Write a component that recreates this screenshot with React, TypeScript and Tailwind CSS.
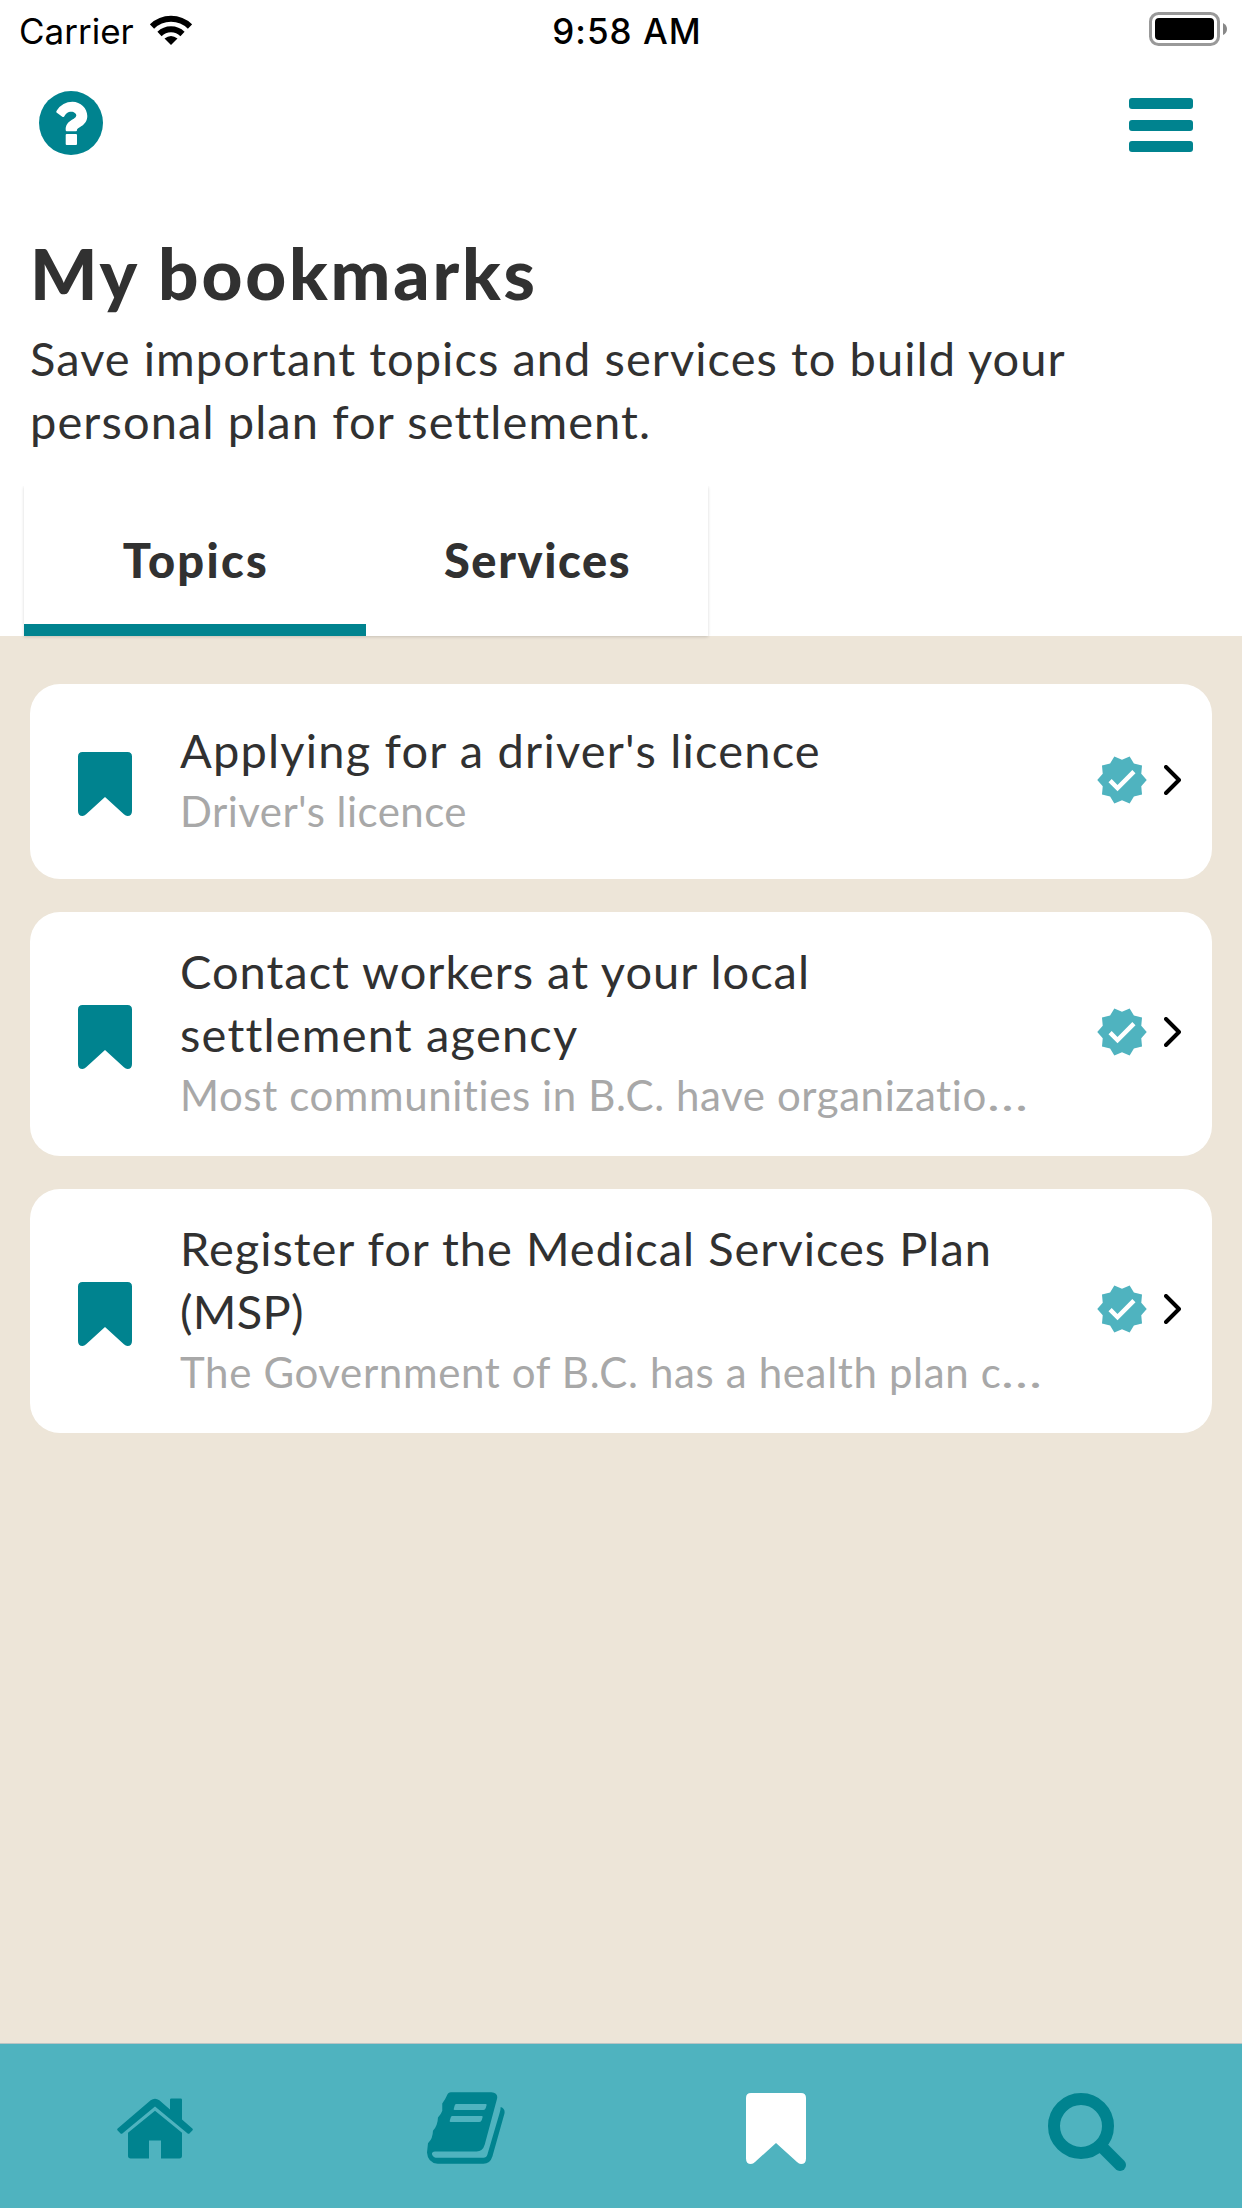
import React from "react";

type Line = [text: string, spacing: string];
type Card = { title: Line[]; sub: Line; truncated?: boolean; height: string };

/** One unbroken line of copy with its own tracking. */
function Fit({ text, spacing, truncated }: { text: string; spacing: string; truncated?: boolean }) {
  return (
    <span className="block whitespace-nowrap" style={{ letterSpacing: spacing }}>
      {text}
      {truncated && <span className="inline-block origin-left scale-x-[1.3]">…</span>}
    </span>
  );
}

function Bookmark({ className }: { className: string }) {
  return (
    <svg viewBox="0 0 60 71" preserveAspectRatio="none" className={className} fill="currentColor">
      <path d="M5 0H55Q60 0 60 5V65.500Q60 71 55 71Q53 71 51 69L30 50L9 69Q7 71 5 71Q0 71 0 65.500V5Q0 0 5 0Z" />
    </svg>
  );
}

function Decagram() {
  return (
    <svg viewBox="0 0 24 24" className="h-[54px] w-[54px] text-[#4fb3bf]" fill="currentColor">
      <path d="M23 12L20.560 9.220L20.900 5.540L17.290 4.720L15.400 1.540L12 3L8.600 1.540L6.710 4.720L3.100 5.530L3.440 9.210L1 12L3.440 14.780L3.100 18.470L6.710 19.290L8.600 22.470L12 21L15.400 22.460L17.290 19.280L20.900 18.460L20.560 14.780L23 12M10 17L6 13L7.410 11.590L10 14.170L16.590 7.580L18 9L10 17Z" />
    </svg>
  );
}

function House() {
  return (
    <svg viewBox="0 0 228 182" className="mt-[5px] h-[61px] w-[76px]" fill="currentColor">
      <path d="M2 91L101 6Q114 -3 127 6L159 34V5Q159 1 163 1H191Q195 1 195 5V64L226 91Q229 94 226 97L218 105Q215 108 211 105L114 25L17 105Q13 108 10 105L2 97Q-1 94 2 91Z" />
      <path d="M114 38L195 104V173Q195 181 187 181H132V127H96V181H41Q33 181 33 173V104Z" />
    </svg>
  );
}

function Book() {
  return (
    <svg viewBox="0 0 235 216" className="mt-[4px] h-[72px] w-[78px]" fill="currentColor">
      <path
        fillRule="evenodd"
        d="M72 0H194Q215 2 211 20L174 158Q168 179 149 179H24Q14 180 15 187Q18 198 32 198H170Q179 198 182 188L219 62Q222 52 222 45Q237 50 233 66L197 194Q190 216 170 216H32Q2 213 0 182L3 154Q12 144 14 138Q18 126 18 116Q26 107 29 98Q33 86 33 76Q43 66 46 56V34Q55 22 60 10Q64 0 72 0ZM88 36H177Q181 36 179 41L177 48Q175 54 170 54H83Q79 54 81 49L83 42Q84 36 88 36ZM76 72H165Q169 72 167 77L165 84Q163 90 158 90H71Q67 90 69 85L71 78Q72 72 76 72Z"
      />
    </svg>
  );
}

const cards: Card[] = [
  { title: [["Applying for a driver's licence", "1.2px"]], sub: ["Driver's licence", "0.45px"], height: "h-[195px]" },
  {
    title: [["Contact workers at your local", "1px"], ["settlement agency", "1.2px"]],
    sub: ["Most communities in B.C. have organizatio", "0.6px"],
    truncated: true,
    height: "h-[244px]",
  },
  {
    title: [["Register for the Medical Services Plan", "1px"], ["(MSP)", "0.3px"]],
    sub: ["The Government of B.C. has a health plan c", "0.65px"],
    truncated: true,
    height: "h-[244px]",
  },
];

export default function App() {
  return (
    <div className="flex h-[2208px] w-[1242px] flex-col overflow-hidden bg-white font-['Lato',sans-serif] text-[#313131]">
      <header className="grid h-[60px] grid-cols-3 items-center px-[19px] font-['Inter',sans-serif] text-[35px] leading-[58px] text-black">
        <div className="flex items-center gap-[16px]">
          <span className="pt-[2px]">Carrier</span>
          <svg viewBox="0 0 42 30" className="h-[30px] w-[42px]" fill="none" stroke="currentColor" strokeWidth="6">
            <path d="M2 11.500A27 27 0 0 1 40 11.500" />
            <path d="M9.500 19A16.500 16.500 0 0 1 32.500 19" />
            <path d="M21 30L14.500 23.500Q21 18.500 27.500 23.500Z" fill="currentColor" stroke="none" />
          </svg>
        </div>
        <span className="pl-[12px] pt-[1px] text-center font-medium tracking-[1px]">9:58 AM</span>
        <svg viewBox="0 0 78 34" className="mb-[2px] mr-[-4px] h-[34px] w-[78px] justify-self-end">
          <rect x="1.500" y="1.500" width="68" height="31" rx="8" fill="none" stroke="#999" strokeWidth="3" />
          <rect x="6" y="6" width="59" height="22" rx="4" />
          <path d="M74 11Q78 13 78 17T74 23Z" fill="#888" />
        </svg>
      </header>

      <nav className="flex h-[126px] items-center justify-between pl-[39px] pr-[49px] text-[#00838f]">
        <svg viewBox="0 0 64 64" className="h-[64px] w-[64px]">
          <circle cx="32" cy="32" r="32" fill="currentColor" />
          <path
            d="M17.800 19.500Q23.500 10.800 33.500 10.800C41.500 10.800 48.300 17.300 48.300 25C48.300 35 38 36 38 39Q38 40.300 37 40.300H27.700Q26.700 40.300 26.700 39C26.700 28.500 37.300 29 37.300 24.300C37.300 22.500 35 20.700 32.500 20.700C28.500 20.700 27 22.500 25.200 25.500Q24.300 26.500 23.300 25.800L17.500 21.500Q16.800 20.800 17.800 19.500Z"
            fill="#fff"
          />
          <rect x="26.700" y="43" width="11.300" height="11" rx="1" fill="#fff" />
        </svg>
        <div className="mt-[4px] flex w-[64px] flex-col gap-[10.5px]">
          <i className="h-[11px] rounded-[3px] bg-[#00838f]" />
          <i className="h-[11px] rounded-[3px] bg-[#00838f]" />
          <i className="h-[11px] rounded-[3px] bg-[#00838f]" />
        </div>
      </nav>

      <section className="h-[300px] px-[30px] pt-[43px]">
        <h1 className="text-[71px] font-black leading-[88px]"><Fit text="My bookmarks" spacing="2.8px" /></h1>
        <p className="mt-[10px] text-[47px] leading-[63px]">
          <Fit text="Save important topics and services to build your" spacing="1.05px" />
          <Fit text="personal plan for settlement." spacing="1.1px" />
        </p>
      </section>

      <div className="z-10 ml-[24px] flex h-[150px] w-[684px] bg-white text-[47px] font-black shadow-[0_1px_3px_rgba(0,0,0,0.16)] [clip-path:inset(0_-4px_-4px_-4px)]">
        <button className="flex w-[342px] items-center justify-center border-b-[12px] border-[#00838f] pl-[2px] pt-[10px]"><Fit text="Topics" spacing="2.3px" /></button>
        <button className="flex w-[342px] items-center justify-center border-b-[12px] border-white pl-[1px] pt-[10px]"><Fit text="Services" spacing="1.6px" /></button>
      </div>

      <main className="flex flex-1 flex-col gap-[33px] bg-[#ede5d8] px-[30px] pt-[48px]">
        {cards.map((c) => (
          <article key={c.sub[0]} className={`${c.height} flex items-center rounded-[30px] bg-white pl-[48px]`}>
            <Bookmark className="mt-[5px] h-[64px] w-[54px] text-[#00838f]" />
            <div className="mb-[5px] ml-[48px] w-[886px]">
              <h2 className="text-[47px] leading-[63px]">{c.title.map(([t, s]) => <Fit key={t} text={t} spacing={s} />)}</h2>
              <p className="pt-px text-[42px] leading-[57px] text-[#a8a8a8]"><Fit text={c.sub[0]} spacing={c.sub[1]} truncated={c.truncated} /></p>
            </div>
            <div className="mb-[4px] ml-[29px] flex items-center gap-[15px]">
              <Decagram />
              <svg viewBox="0 0 17 30" className="h-[30px] w-[17px]" fill="none" stroke="#000" strokeWidth="4" strokeLinecap="round" strokeLinejoin="round"><path d="M2 2L15 15L2 28" /></svg>
            </div>
          </article>
        ))}
      </main>

      <footer className="grid h-[165px] grid-cols-4 items-center justify-items-center border-t border-[#b8c4c4] bg-[#4fb3bf] text-[#00838f]">
        <House />
        <Book />
        <Bookmark className="mt-[4px] h-[71px] w-[60px] text-white" />
        <svg viewBox="0 0 78 78" className="mt-[11px] h-[78px] w-[78px]" fill="none" stroke="currentColor" strokeWidth="12" strokeLinecap="round"><circle cx="33" cy="33" r="27" /><path d="M54 54L72 72" /></svg>
      </footer>
    </div>
  );
}
